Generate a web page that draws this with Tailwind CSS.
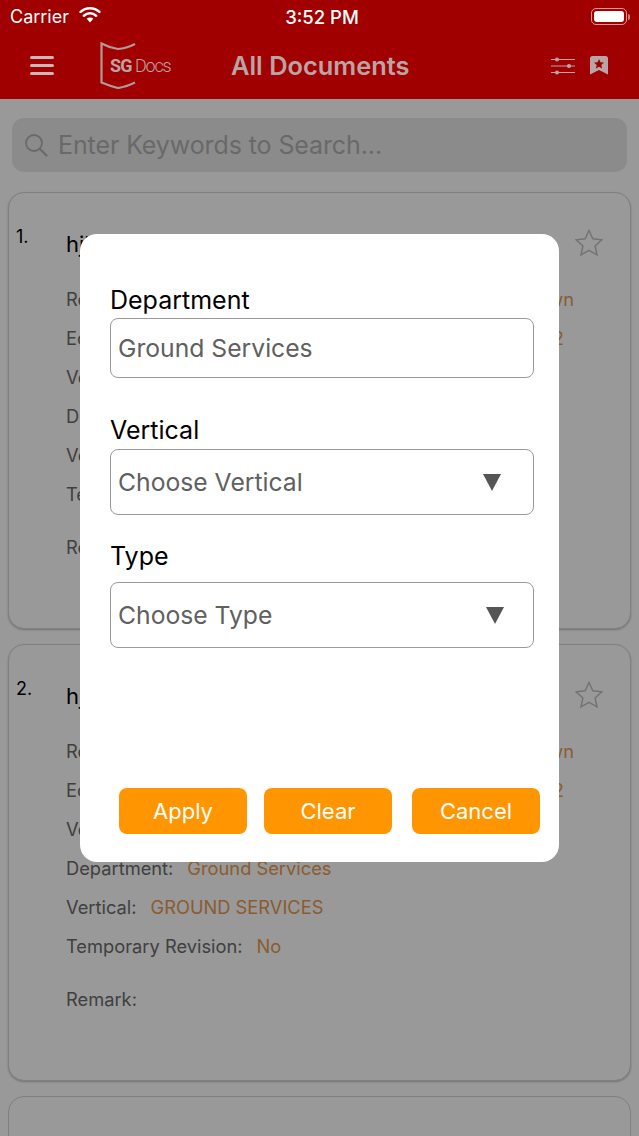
<!doctype html>
<html>
<head>
<meta charset="utf-8">
<script src="https://cdn.jsdelivr.net/npm/@tailwindcss/browser@4"></script>
</head>
<body class="m-0">
<div class="relative w-[639px] h-[1136px] overflow-hidden bg-white font-['Inter','Liberation_Sans',sans-serif]">
  <!-- Page content, dimmed by the overlay -->
  <div class="pt-[99px]">
    <div class="mx-[12px] mt-[19px] h-[54px] rounded-[12px] bg-[#e8e8e8] flex items-center pl-[12px] text-[#b0b0b0]">
      <svg class="w-[24px] h-[24px]" viewBox="0 0 24 24"><circle cx="10" cy="10" r="8" fill="none" stroke="#b0b0b0" stroke-width="1.800"/><path d="M16 16l6.500 6.500" stroke="#b0b0b0" stroke-width="2.200" stroke-linecap="round"/></svg>
      <span class="ml-[10px] text-[25px] leading-[32px] tracking-[-0.1px]">Enter Keywords to Search...</span>
    </div>

    <div class="mx-[8px] mt-[20px] flex flex-col gap-[15px]">
      <article class="relative h-[437px] rounded-[16px] border border-[#d5d5d5] bg-white shadow-[0_1px_2px_rgba(0,0,0,0.25)]">
        <span class="absolute left-[7px] top-[33px] text-[18px] leading-[22px] text-black">1.</span>
        <h2 class="absolute left-[57px] top-[36px] text-[22px] leading-[30px] text-black">hjk</h2>
        <svg class="absolute right-[27px] top-[36px] w-[28px] h-[28px]" viewBox="0 0 28 28"><path d="M14 1.500l3.800 8.300 9 1-6.700 6.100 1.900 8.900-8-4.500-8 4.500 1.900-8.900L1.200 10.800l9-1z" fill="none" stroke="#c0c0c0" stroke-width="1.500"/></svg>
        <div class="pl-[57px] pr-[56px] pt-[94px] text-[18.300px] leading-[24px] text-[#6b6b6b]">
          <p class="h-[39px] flex justify-between"><span>Revision:</span><span class="text-[#e69a4f]">Shown</span></p>
          <p class="h-[39px] flex justify-between pr-[10px]"><span>Edition:</span><span class="text-[#e69a4f]">2</span></p>
          <p class="h-[39px]">Version:</p>
          <p class="h-[39px]">Department:</p>
          <p class="h-[39px]">Vertical:</p>
          <p class="h-[53px]">Temporary Revision:</p>
          <p>Remark:</p>
        </div>
      </article>
      <article class="relative h-[437px] rounded-[16px] border border-[#d5d5d5] bg-white shadow-[0_1px_2px_rgba(0,0,0,0.25)]">
        <span class="absolute left-[7px] top-[33px] text-[18px] leading-[22px] text-black">2.</span>
        <h2 class="absolute left-[57px] top-[36px] text-[22px] leading-[30px] text-black">hjk</h2>
        <svg class="absolute right-[27px] top-[36px] w-[28px] h-[28px]" viewBox="0 0 28 28"><path d="M14 1.500l3.800 8.300 9 1-6.700 6.100 1.900 8.900-8-4.500-8 4.500 1.900-8.900L1.200 10.800l9-1z" fill="none" stroke="#c0c0c0" stroke-width="1.500"/></svg>
        <div class="pl-[57px] pr-[56px] pt-[94px] text-[18.300px] leading-[24px] text-[#6b6b6b]">
          <p class="h-[39px] flex justify-between"><span>Revision:</span><span class="text-[#e69a4f]">Shown</span></p>
          <p class="h-[39px] flex justify-between pr-[10px]"><span>Edition:</span><span class="text-[#e69a4f]">2</span></p>
          <p class="h-[39px]">Version:</p>
          <p class="h-[39px]">Department:<span class="ml-[14px] text-[#e69a4f]">Ground Services</span></p>
          <p class="h-[39px]">Vertical:<span class="ml-[14px] text-[#e69a4f]">GROUND SERVICES</span></p>
          <p class="h-[53px]">Temporary Revision:<span class="ml-[14px] text-[#e69a4f]">No</span></p>
          <p>Remark:</p>
        </div>
      </article>
      <article class="h-[60px] rounded-[16px] border border-[#d5d5d5] bg-white"></article>
    </div>
  </div>

  <!-- Dim -->
  <div class="absolute inset-0 bg-black/40"></div>

  <!-- Status bar and app bar -->
  <header class="absolute inset-x-0 top-0 h-[99px] bg-[#a10000] flex flex-col">
    <div class="h-[32px] pt-[1px] px-[10px] grid grid-cols-[1fr_auto_1fr] items-center text-white">
      <div class="flex items-center gap-[10px] text-[18px] leading-[22px]">Carrier
        <svg class="w-[22px] h-[16px] -mt-[3px]" viewBox="0 0 22 17"><path d="M11 16.500l3.500-4a5 5 0 0 0-7 0z" fill="#fff"/><path d="M4.500 9.300a9.500 9.500 0 0 1 13 0M1 5.300a14.500 14.500 0 0 1 20 0" fill="none" stroke="#fff" stroke-width="2.600" stroke-linecap="round"/></svg>
      </div>
      <span class="ml-[5px] text-[18.500px] leading-[22px] font-medium">3:52 PM</span>
      <div class="flex items-center justify-end -mr-[1px]">
        <div class="w-[36px] h-[17px] rounded-[5px] border border-white/60 p-[2px]"><div class="w-full h-full rounded-[3px] bg-white"></div></div>
        <div class="ml-[1px] w-[2px] h-[6px] rounded-r-sm bg-white/50"></div>
      </div>
    </div>
    <div class="flex-1 flex items-center pl-[30px] pr-[31px] text-[#b9a5a5]">
      <svg class="w-[24px] h-[20px]" viewBox="0 0 24 20"><path d="M1.500 1.500h21M1.500 9.500h21M1.500 17.500h21" stroke="#c8b8b8" stroke-width="3" stroke-linecap="round" fill="none"/></svg>
      <div class="relative ml-[46px] w-[72px] h-[47px]">
        <svg class="absolute left-0 top-0 w-[36px] h-[47px]" viewBox="0 0 36 47"><path d="M35 2 Q26 6.500 18 7 Q9 5.500 1.500 1.500 V40.500 Q10 44 18 46 Q26 45 35 40.500" fill="none" stroke="#b09c9c" stroke-width="2.200"/></svg>
        <span class="absolute left-[10px] top-[13px] bg-[#a10000] pr-[5px] leading-[22px] text-[18px] font-bold tracking-[-0.8px] font-['Roboto',sans-serif]">SG</span>
        <span class="absolute left-[35px] top-[13px] leading-[22px] text-[18px] font-light tracking-[-1.200px] font-['Roboto',sans-serif]">Docs</span>
      </div>
      <h1 class="ml-[59px] text-[25.400px] leading-[36px] font-semibold">All Documents</h1>
      <div class="ml-auto flex items-center gap-[15px]">
        <svg class="w-[24px] h-[18px]" viewBox="0 0 24 18"><g stroke="#b9a5a5" stroke-width="1.100" fill="#b9a5a5"><path d="M0 2.500h24M0 9h24M0 15.500h24"/><circle cx="6" cy="2.500" r="1.500"/><circle cx="18" cy="9" r="1.500"/><circle cx="6" cy="15.500" r="1.500"/></g></svg>
        <svg class="w-[18px] h-[19px]" viewBox="0 0 18 19"><path d="M2.500 0h13A2.500 2.500 0 0 1 18 2.500V18.500L9 14 0 18.500V2.500A2.500 2.500 0 0 1 2.500 0z" fill="#b9a5a5"/><path d="M9 3l1.500 3.300 3.500.3-2.700 2.300.9 3.500L9 10.700l-3.200 1.700.9-3.500L4 6.600l3.500-.3z" fill="#a10000"/></svg>
      </div>
    </div>
  </header>

  <!-- Filter dialog -->
  <div class="absolute left-[80px] top-[234px] w-[479px] h-[628px] rounded-[17px] bg-white pl-[30px] pr-[25px] pt-[50px] flex flex-col">
    <label class="text-[25px] leading-[33px] text-black">Department</label>
    <div class="mt-[1px] h-[60px] rounded-[8px] border border-[#9a9a9a] flex items-center pl-[7px] pt-[1px] text-[24.700px] text-[#606060]">Ground Services</div>
    <label class="mt-[36px] text-[25px] leading-[33px] text-black">Vertical</label>
    <div class="mt-[2px] h-[66px] rounded-[8px] border border-[#9a9a9a] flex items-center pl-[7px] pr-[32px] pt-[1px] justify-between text-[24.700px] text-[#606060]">Choose Vertical
      <svg class="w-[18px] h-[17px]" viewBox="0 0 18 17"><path d="M0 0h18L9 17z" fill="#555"/></svg>
    </div>
    <label class="mt-[25px] text-[25px] leading-[33px] text-black">Type</label>
    <div class="mt-[9px] h-[66px] rounded-[8px] border border-[#9a9a9a] flex items-center pl-[7px] pr-[29px] pt-[1px] justify-between text-[24.700px] text-[#606060]">Choose Type
      <svg class="w-[18px] h-[17px]" viewBox="0 0 18 17"><path d="M0 0h18L9 17z" fill="#555"/></svg>
    </div>
    <div class="mt-[140px] ml-[9px] flex">
      <button class="shrink-0 w-[128px] h-[46px] rounded-[8px] bg-[#ff9500] text-white text-[22px]">Apply</button>
      <button class="shrink-0 ml-[17px] w-[128px] h-[46px] rounded-[8px] bg-[#ff9500] text-white text-[22px]">Clear</button>
      <button class="shrink-0 ml-[20px] w-[128px] h-[46px] rounded-[8px] bg-[#ff9500] text-white text-[22px]">Cancel</button>
    </div>
  </div>
</div>
</body>
</html>
